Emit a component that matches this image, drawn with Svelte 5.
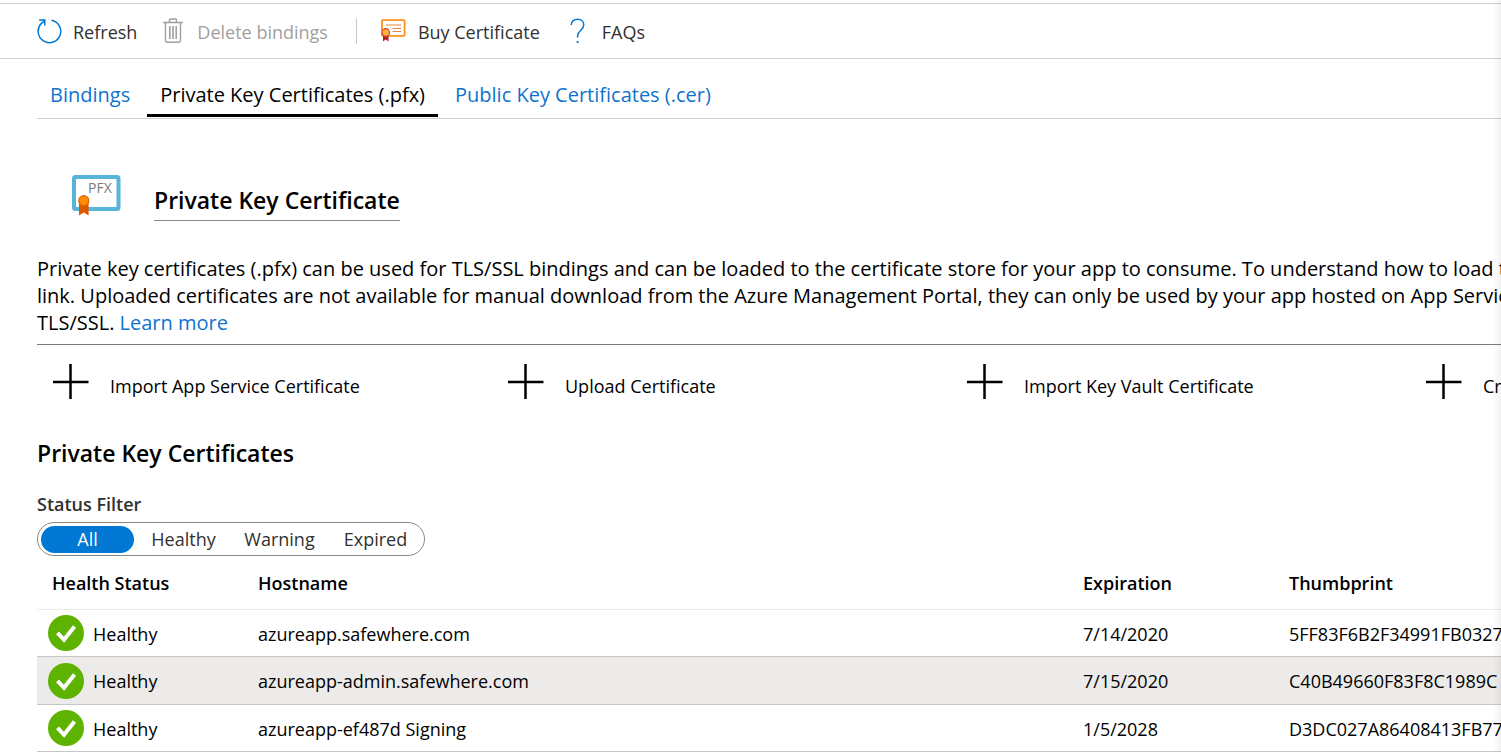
<script>
  const tabs = ['Bindings', 'Private Key Certificates (.pfx)', 'Public Key Certificates (.cer)'];
  let activeTab = $state(tabs[1]);

  const filters = ['All', 'Healthy', 'Warning', 'Expired'];
  let filter = $state('All');

  const actions = [
    'Import App Service Certificate',
    'Upload Certificate',
    'Import Key Vault Certificate',
    'Cr'
  ];

  const certificates = [
    { status: 'Healthy', host: 'azureapp.safewhere.com', expires: '7/14/2020', thumbprint: '5FF83F6B2F34991FB0327' },
    { status: 'Healthy', host: 'azureapp-admin.safewhere.com', expires: '7/15/2020', thumbprint: 'C40B49660F83F8C1989C', selected: true },
    { status: 'Healthy', host: 'azureapp-ef487d Signing', expires: '1/5/2028', thumbprint: 'D3DC027A86408413FB77' }
  ];

  let shown = $derived(certificates.filter((c) => filter === 'All' || c.status === filter));
</script>

<div class="page">
  <header class="toolbar">
    <button class="command">
      <svg width="26" height="26" viewBox="0 0 26 26" fill="none" stroke="#0078d4" stroke-width="1.5">
        <path d="M15.5 2.2A11.3 11.3 0 1 1 5.2 5.6L8.6 2.6" />
        <path d="M3.2 2.1h5.6v5.4" />
      </svg>
      <span>Refresh</span>
    </button>
    <button class="command" disabled>
      <svg width="20" height="26" viewBox="0 0 20 26" fill="none" stroke="#a19f9d" stroke-width="1.4">
        <path d="M0 4.5h20M6.5 4V1.8q0-.8.8-.8h5.4q.8 0 .8.8V4" />
        <path d="M2.5 5v17.6q0 1.7 1.7 1.7h11.6q1.7 0 1.7-1.7V5" />
        <path d="M6.8 8v13M10 8v13M13.2 8v13" stroke-width="1.6" />
      </svg>
      <span>Delete bindings</span>
    </button>
    <span class="divider"></span>
    <button class="command buy">
      <svg width="25" height="24" viewBox="0 0 25 24">
        <rect x="1" y="1.2" width="22.6" height="15.6" rx=".8" fill="#fff" stroke="#f7931e" stroke-width="1.8" />
        <path d="M5 6h15M11.5 9.5h8.5M11.5 12.5h8.5" stroke="#e8833a" stroke-width="1.1" />
        <path d="M2 16v6.5l2.7-2L7.500 22.500V16z" fill="#b3202c" />
        <circle cx="4.7" cy="13.5" r="3.800" fill="#fbb040" stroke="#d8452f" stroke-width="1.2" />
      </svg>
      <span>Buy Certificate</span>
    </button>
    <button class="command faq">
      <svg width="16" height="26" viewBox="0 0 16 26" fill="none" stroke="#0078d4" stroke-width="1.5">
        <path d="M1.2 7C1.2 3.5 4 1.3 7.6 1.3c3.6 0 6.2 2.2 6.2 5.5 0 3-1.6 4.4-3.4 6-1.8 1.6-2.8 2.7-2.8 4.7v2" />
        <path d="M7.6 23v2" stroke-width="1.8" />
      </svg>
      <span>FAQs</span>
    </button>
  </header>

  <main>
    <nav class="tabs">
      {#each tabs as tab}
        <button class="tab" class:active={tab === activeTab} onclick={() => (activeTab = tab)}>{tab}</button>
      {/each}
    </nav>

    <div class="title">
      <svg width="49" height="42" viewBox="0 0 49 42">
        <rect x="2" y="2" width="44.5" height="32" rx="1.5" fill="#fff" stroke="#59b4d9" stroke-width="4" />
        <text x="16" y="18" font-size="14" fill="#7a7a7a">PFX</text>
        <path d="M7 27v13.5l4.8-3 4.8 3V27z" fill="#dd5900" />
        <circle cx="11.8" cy="25.7" r="5" fill="#ff8c00" stroke="#e06500" stroke-width="1.2" />
      </svg>
      <h1>Private Key Certificate</h1>
    </div>

    <p class="intro">
      <span>Private key certificates (.pfx) can be used for TLS/SSL bindings and can be loaded to the certificate store for your app to consume. To understand how to load t</span>
      <span>link. Uploaded certificates are not available for manual download from the Azure Management Portal, they can only be used by your app hosted on App Servic</span>
      <span>TLS/SSL. <a href="#learn-more">Learn more</a></span>
    </p>

    <div class="actions">
      {#each actions as action}
        <button class="action">
          <svg width="36" height="36" viewBox="0 0 36 36" stroke="#000" stroke-width="2.5">
            <path d="M17.5 0v35M0 18h35.5" />
          </svg>
          <span>{action}</span>
        </button>
      {/each}
    </div>

    <h2>Private Key Certificates</h2>

    <fieldset>
      <legend>Status Filter</legend>
      <div class="segments">
        {#each filters as option}
          <label class:chosen={option === filter}>
            <input type="radio" name="status" value={option} bind:group={filter} />
            {option}
          </label>
        {/each}
      </div>
    </fieldset>

    <table>
      <colgroup>
        <col class="narrow" /><col /><col class="narrow" /><col class="thumb" />
      </colgroup>
      <thead>
        <tr><th>Health Status</th><th>Hostname</th><th>Expiration</th><th>Thumbprint</th></tr>
      </thead>
      <tbody>
        {#each shown as cert}
          <tr class:selected={cert.selected}>
            <td class="health">
              <div>
                <svg width="36" height="36" viewBox="0 0 36 36">
                  <circle cx="18" cy="18" r="18" fill="#5db300" />
                  <path d="M9.5 17.8l6.5 7L26.5 11.5" fill="none" stroke="#fff" stroke-width="4" />
                </svg>
                <span>{cert.status}</span>
              </div>
            </td>
            <td>{cert.host}</td>
            <td>{cert.expires}</td>
            <td>{cert.thumbprint}</td>
          </tr>
        {/each}
      </tbody>
    </table>
  </main>
  <div class="edge"></div>
</div>

<style>
  :global(body) {
    background: #fff;
  }
  .page {
    position: relative;
    overflow: hidden;
    padding-top: 3px;
    color: #000;
    font-family: 'Open Sans', 'Noto Sans', sans-serif;
    font-size: 18px;
    line-height: 27px;
  }
  button {
    padding: 0;
    border: 0;
    background: none;
    color: inherit;
    font: inherit;
    white-space: nowrap;
    cursor: pointer;
  }
  svg {
    display: block;
    flex: none;
  }
  .toolbar {
    display: flex;
    align-items: center;
    height: 54px;
    padding-left: 36px;
    border-top: 1px solid #d2d0ce;
    border-bottom: 1px solid #d2d0ce;
    color: #323130;
  }
  .command {
    display: flex;
    align-items: center;
    gap: 11px;
    margin-right: 26px;
  }
  .command span {
    padding-top: 2px;
  }
  .command:disabled {
    gap: 14px;
    margin-right: 28px;
    color: #a19f9d;
    cursor: default;
  }
  .divider {
    width: 1px;
    height: 26px;
    margin-right: 24px;
    background: #c8c6c4;
  }
  .buy {
    gap: 12px;
    margin-right: 30px;
  }
  .faq {
    gap: 16px;
  }
  main {
    padding-left: 37px;
  }
  .tabs {
    display: flex;
    gap: 4px;
    height: 59px;
    border-bottom: 1px solid #d2d0ce;
    font-size: 20px;
  }
  .tab {
    height: 58px;
    padding: 15px 13px 0;
    border-bottom: 3px solid transparent;
    color: #0f73ce;
  }
  .tab.active {
    border-bottom-color: #000;
    color: #000;
  }
  .title {
    display: flex;
    align-items: flex-start;
    gap: 33px;
    padding: 56px 0 34px 35px;
  }
  h1,
  h2 {
    margin: 0;
    font-size: 23px;
    font-weight: 600;
    line-height: 32px;
  }
  h1 {
    margin-top: 9px;
    padding-bottom: 4px;
    border-bottom: 1px solid #8a8886;
  }
  .intro {
    margin: 0;
    padding-bottom: 8px;
    border-bottom: 1px solid #7d7b79;
    font-size: 20px;
    white-space: nowrap;
  }
  .intro span {
    display: block;
  }
  a {
    color: #0f73ce;
    text-decoration: none;
  }
  .actions {
    display: grid;
    grid-template-columns: 455fr 459fr 459fr 91px;
    padding: 19px 0 37px;
  }
  .action {
    display: flex;
    gap: 21px;
    padding-left: 16px;
  }
  .action span {
    padding-top: 9px;
  }
  fieldset {
    margin: 22px 0 0;
    padding: 0;
    border: 0;
  }
  legend {
    padding: 0;
    color: #323130;
    font-weight: 600;
  }
  .segments {
    display: inline-flex;
    gap: 3px;
    margin-top: 4px;
    padding: 3px 2px 2px 3px;
    border: 1px solid #8a8886;
    border-radius: 18px;
    vertical-align: top;
  }
  label {
    position: relative;
    width: 93px;
    border-radius: 14px;
    color: #323130;
    line-height: 27px;
    text-align: center;
    cursor: pointer;
  }
  label.chosen {
    background: #0078d4;
    color: #fff;
  }
  label input {
    position: absolute;
    inset: 0;
    margin: 0;
    opacity: 0;
  }
  table {
    width: 100%;
    margin-top: 1px;
    table-layout: fixed;
    border-collapse: separate;
    border-spacing: 0;
  }
  .narrow {
    width: 206px;
  }
  .thumb {
    width: 227px;
  }
  th,
  td {
    height: 44px;
    padding: 2px 0 0 15px;
    border-bottom: 1px solid #c8c6c4;
    text-align: left;
    white-space: nowrap;
  }
  th {
    height: 52px;
    padding-top: 0;
    border-bottom-color: #edebe9;
    font-weight: 600;
  }
  td.health {
    height: 46px;
    padding: 0 0 0 11px;
  }
  .health div {
    display: flex;
    align-items: center;
    gap: 9px;
  }
  .health span {
    padding-top: 2px;
  }
  .selected td.health {
    height: 47px;
  }
  .selected td {
    background: #edebe9;
  }
  .edge {
    position: absolute;
    inset: 0 0 0 auto;
    width: 8px;
    background: linear-gradient(to right, rgba(0, 0, 0, 0), rgba(0, 0, 0, 0.05));
    pointer-events: none;
  }
</style>
